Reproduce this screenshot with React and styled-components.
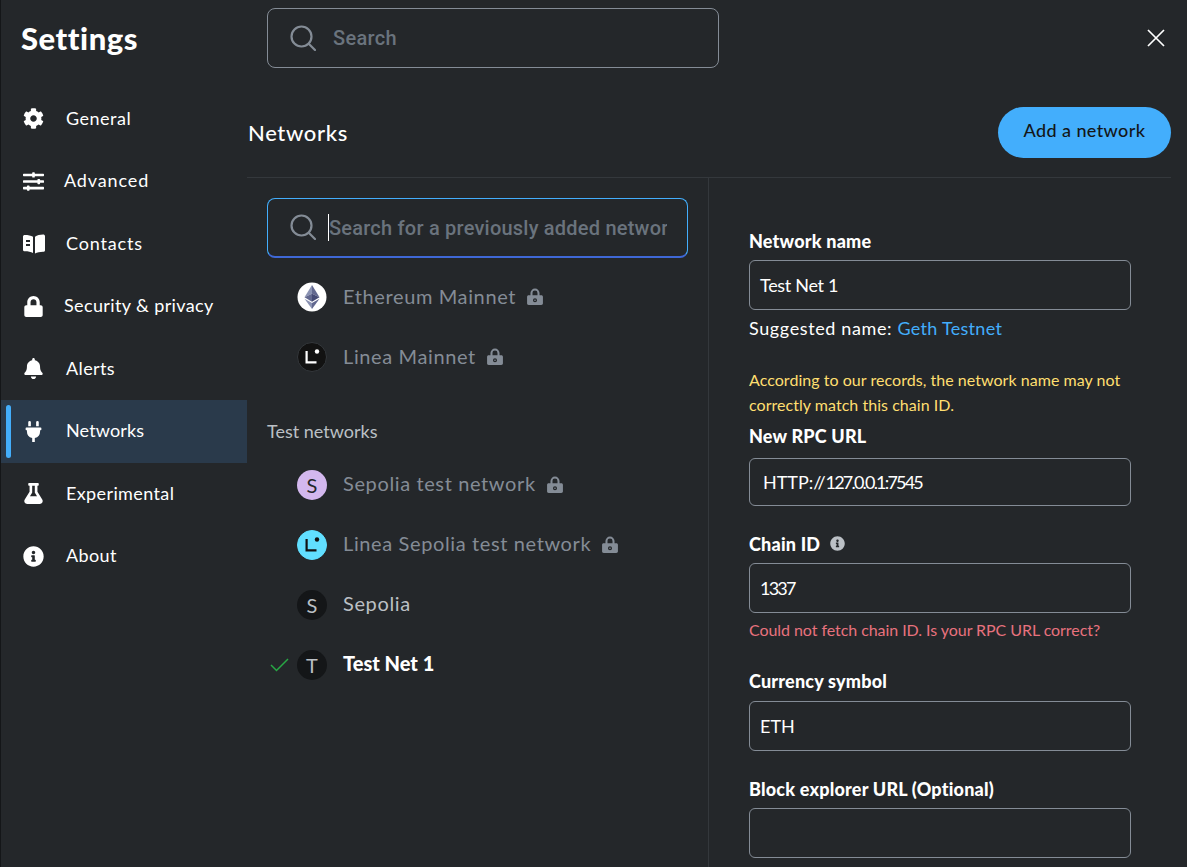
import React from 'react';
import styled, { createGlobalStyle } from 'styled-components';
import { FaCog, FaSlidersH, FaLock, FaBell, FaPlug, FaFlask, FaInfoCircle } from 'react-icons/fa';

const Global = createGlobalStyle`
  html, body { margin: 0; padding: 0; height: 100%; background: #24272a; overflow: hidden; }
  * { box-sizing: border-box; }
  body { font-family: "Lato", "Liberation Sans", sans-serif; color: #fff; }
`;

const Page = styled.div`
  width: 1187px; height: 867px; overflow: hidden; display: flex; flex-direction: column;
  background: #24272a; border-left: 1px solid #141618;
`;
const Header = styled.header`
  flex: 0 0 87.5px; display: flex; align-items: flex-start; position: relative;
`;
const Title = styled.h1`
  margin: 0; width: 266px; padding: 19px 0 0 20px; font-size: 31px; line-height: 38px; font-weight: 900; letter-spacing: .55px;
`;
const SearchBox = styled.div`
  display: flex; align-items: center; gap: 17px; margin-top: ${p => p.$mt ?? 8}px; width: ${p => p.$w}px; height: ${p => p.$h}px;
  padding: 0 20px 0 22px; border: 1px solid ${p => p.$focus ? '#43aefc' : '#848c96'}; border-radius: 8px;
  border-bottom: ${p => p.$focus ? '2px solid #3f68d6' : undefined};
  overflow: hidden; flex: none;
`;
const SearchText = styled.span`
  font-family: "Roboto", sans-serif; font-size: 20px; font-weight: 500; color: #6a737d; white-space: nowrap; overflow: hidden;
  min-width: 0; letter-spacing: .3px;
`;
const CaretText = styled(SearchText)`
  border-left: 1.5px solid #fff; margin-left: -5px; line-height: 26px; padding-top: 1px; letter-spacing: .22px;
`;
const Close = styled.button`
  position: absolute; right: 20px; top: 28px; width: 21px; height: 21px; padding: 0; border: 0; background: none; display: flex;
`;
const Body = styled.div`flex: 1; display: flex; min-height: 0;`;
const Sidebar = styled.nav`flex: 0 0 246px; display: flex; flex-direction: column;`;
const Item = styled.div`
  height: 62.5px; display: flex; align-items: center; position: relative; font-size: 18px;
  background: ${p => p.$active ? '#2a3a4b' : 'transparent'};
`;
const ItemIcon = styled.span`
  width: 65px; padding-left: 22px; display: flex; flex: none; font-size: 21px;
`;
const ItemLabel = styled.span`margin-left: ${p => p.$ml ?? 0}px; padding-bottom: 2px; letter-spacing: ${p => p.$ls ?? .38}px;`;
const Indicator = styled.span`
  position: absolute; left: 5px; top: 5px; bottom: 5px; width: 5px; border-radius: 3px; background: #43aefc;
`;
const Content = styled.main`flex: 1; display: flex; flex-direction: column; min-width: 0; padding-right: 16px;`;
const SectionHead = styled.div`
  height: 90px; display: flex; align-items: flex-start; justify-content: space-between; padding-top: 19.5px; border-bottom: 1px solid #34383c;
`;
const SectionTitle = styled.h2`margin: 0; font-size: 22px; font-weight: 500; line-height: 52px; padding-left: 1px; letter-spacing: .65px;`;
const AddButton = styled.button`
  width: 173px; height: 51px; padding: 0 0 5px; border: 0; border-radius: 26px; background: #43aefc; color: #141618; font: 500 18px "Lato", sans-serif; letter-spacing: .4px; flex: none;
`;
const Columns = styled.div`flex: 1; display: flex; min-height: 0;`;
const ListCol = styled.section`
  flex: 0 0 462px; border-right: 1px solid #34383c; padding-left: 20px; display: flex; flex-direction: column;
`;
const Net = styled.div`
  height: 60px; display: flex; align-items: center; padding-left: 30px; position: relative; font-size: 20px; letter-spacing: ${p => p.$bold ? 0 : '.62px'};
  margin-top: ${p => p.$mt ?? 0}px;
  color: ${p => p.$bold ? '#fff' : p.$sub ? '#bbc0c5' : '#848c96'}; font-weight: ${p => p.$bold ? 900 : 400};
`;
const NetName = styled.span`padding-bottom: ${p => p.$pb ?? 3}px; margin-left: 1px;`;
const Avatar = styled.span`
  width: 30px; height: 30px; border-radius: 50%; flex: none; margin-right: 15px; display: flex; align-items: center; justify-content: center;
  background: ${p => p.$bg}; color: ${p => p.$fg}; font-size: 20px; font-weight: 400; letter-spacing: 0;
`;
const Check = styled.svg`position: absolute; left: 3px; top: 22px;`;
const Lock = styled.svg`margin-left: 11px; flex: none;`;
const Group = styled.div`
  height: 40px; margin-top: 24px; margin-bottom: 4px; display: flex; align-items: center; font-size: 18px; color: #bbc0c5;
`;
const FormCol = styled.section`flex: 0 0 382px; margin-left: 40px; padding-top: 51px; display: flex; flex-direction: column;`;
const Label = styled.label`
  display: flex; align-items: center; gap: 10px; font-size: 18px; font-weight: 900; line-height: 24px; height: 24px; letter-spacing: .2px;
  margin-top: ${p => p.$mt ?? 0}px;
`;
const Input = styled.div`
  width: 382px; height: ${p => p.$h ?? 50}px; margin-top: ${p => p.$mt ?? 7}px; border: 1px solid #848c96; border-radius: 6px; display: flex; align-items: center;
  padding-left: ${p => p.$pl ?? 10}px; font-size: 18px; white-space: pre;
`;
const Digits = styled.span`letter-spacing: ${p => p.$ls}px;`;
const Suggest = styled.div`font-size: 18px; line-height: 24px; margin-top: 6px; letter-spacing: .62px;`;
const Link = styled.a`color: #43aefc; letter-spacing: .3px;`;
const Warn = styled.div`font-size: 16px; line-height: 25px; color: #ffdf70; margin-top: 27px; letter-spacing: .04px;`;
const Err = styled.div`font-size: 16px; line-height: 20px; color: #e8727e; margin-top: 7px; letter-spacing: -.06px;`;

const Mag = () => (
  <svg width="26" height="26" viewBox="0 0 26 26" fill="none" stroke="#848c96" strokeWidth="2.2" style={{flex:'none'}}>
    <circle cx="11.5" cy="11.5" r="10" /><path d="M19 19l6 6" strokeLinecap="round" />
  </svg>
);
const BookIcon = () => (
  <svg width="22" height="20" viewBox="0 0 22 20"><path fill="#fff" fillRule="evenodd" d="M0 2.5C0 1.5.8 1 2 1c3 0 6 .6 8 1.8V19c-2-1.2-5-1.7-8-1.7-1.2 0-2-.5-2-1.5zM3 6h4v2H3zm0 4h4v2H3zM12 2.8C14 1.5 17 .6 20 .6c1.2 0 2 .6 2 1.6v14c0 1-.8 1.5-2 1.6-3 .2-6 .6-8 1.7z"/></svg>
);
const LockSmall = () => (
  <Lock width="16" height="17" viewBox="1 0 14 15">
    <path fill="#848c96" fillRule="evenodd" d="M4 6.500V4.500a4 4 0 018 0v2h1.500c1 0 1.500.6 1.500 1.500v5.500c0 1-.6 1.500-1.500 1.500h-11C1.500 15 1 14.400 1 13.500V8c0-.9.5-1.500 1.500-1.500zm1.800 0h4.400V4.500a2.200 2.200 0 00-4.400 0zM8 9a1.800 1.800 0 100 3.600A1.800 1.800 0 008 9zm0 1.100a.7.7 0 110 1.400.7.7 0 010-1.400z"/>
  </Lock>
);
const Eth = () => (
  <svg width="30" height="30" viewBox="0 0 30 30" style={{marginRight:15,flex:'none'}}>
    <circle cx="15" cy="15" r="14.500" fill="#fff"/>
    <path fill="#8a92b2" d="M15 3l-7.500 12.300L15 11.800z"/><path fill="#62688f" d="M15 3v8.800l7.500 3.500z"/>
    <path fill="#62688f" d="M15 11.800l-7.500 3.500 7.500 4.400z"/><path fill="#454a75" d="M15 11.800v7.900l7.500-4.400z"/>
    <path fill="#8a92b2" d="M7.500 16.700L15 27v-6z"/><path fill="#62688f" d="M15 21v6l7.500-10.300z"/>
  </svg>
);
const LineaIcon = ({bg, fg}) => (
  <svg width="30" height="30" viewBox="0 0 30 30" style={{marginRight:15,flex:'none'}}>
    <circle cx="15" cy="15" r="14.500" fill={bg} stroke={bg === '#121212' ? '#34383c' : bg}/>
    <path fill={fg} d="M8.500 9h2.200v10.200h8.800V21.500H8.500z"/><circle cx="20" cy="9.500" r="2.200" fill={fg}/>
  </svg>
);

const items = [
  { label: 'General', icon: <FaCog />, ls: .5 },
  { label: 'Advanced', icon: <FaSlidersH />, ml: -2, ls: .88 },
  { label: 'Contacts', icon: <BookIcon />, ls: .85 },
  { label: 'Security & privacy', icon: <FaLock />, ml: -2 },
  { label: 'Alerts', icon: <FaBell /> },
  { label: 'Networks', icon: <FaPlug />, active: true, ls: .15 },
  { label: 'Experimental', icon: <FaFlask /> },
  { label: 'About', icon: <FaInfoCircle /> },
];

export default function App() {
  return (
    <Page>
      <Global />
      <Header>
        <Title>Settings</Title>
        <SearchBox $w={452} $h={60}><Mag /><SearchText>Search</SearchText></SearchBox>
        <Close aria-label="close">
          <svg width="21" height="21" viewBox="0 0 21 21" stroke="#fff" strokeWidth="1.700"><path d="M2 2l16 16M18 2L2 18"/></svg>
        </Close>
      </Header>
      <Body>
        <Sidebar>
          {items.map(it => (
            <Item key={it.label} $active={it.active}>
              {it.active && <Indicator />}
              <ItemIcon>{it.icon}</ItemIcon>
              <ItemLabel $ml={it.ml} $ls={it.ls}>{it.label}</ItemLabel>
            </Item>
          ))}
        </Sidebar>
        <Content>
          <SectionHead>
            <SectionTitle>Networks</SectionTitle>
            <AddButton>Add a network</AddButton>
          </SectionHead>
          <Columns>
            <ListCol>
              <SearchBox $w={421} $h={60} $focus $mt={20}><Mag /><CaretText>Search for a previously added network</CaretText></SearchBox>
              <Net $mt={9}><Eth /><NetName $pb={1}>Ethereum Mainnet</NetName><LockSmall /></Net>
              <Net><LineaIcon bg="#121212" fg="#fff" /><NetName $pb={1}>Linea Mainnet</NetName><LockSmall /></Net>
              <Group>Test networks</Group>
              <Net><Avatar $bg="#d3b8ee" $fg="#24272a">S</Avatar><NetName>Sepolia test network</NetName><LockSmall /></Net>
              <Net><LineaIcon bg="#61dfff" fg="#121212" /><NetName>Linea Sepolia test network</NetName><LockSmall /></Net>
              <Net $sub><Avatar $bg="#141618" $fg="#bbc0c5">S</Avatar><NetName>Sepolia</NetName></Net>
              <Net $bold>
                <Check width="20" height="16" viewBox="0 0 20 16" fill="none" stroke="#28a745" strokeWidth="1.500"><path d="M1 8l5.500 5.500L18 2"/></Check>
                <Avatar $bg="#141618" $fg="#bbc0c5">T</Avatar><NetName>Test Net 1</NetName>
              </Net>
            </ListCol>
            <FormCol>
              <Label>Network name</Label>
              <Input><Digits $ls={-.3}>Test Net 1</Digits></Input>
              <Suggest>Suggested name: <Link>Geth Testnet</Link></Suggest>
              <Warn>According to our records, the network name may not correctly match this chain ID.</Warn>
              <Label $mt={7}>New RPC URL</Label>
              <Input $h={48} $mt={10} $pl={13}>HTTP://<Digits $ls={-1.8}>127.0.0.1:7545</Digits></Input>
              <Label $mt={26}>Chain ID <FaInfoCircle size={15} color="#bbc0c5" /></Label>
              <Input $mt={7}><Digits $ls={-1.8}>1337</Digits></Input>
              <Err>Could not fetch chain ID. Is your RPC URL correct?</Err>
              <Label $mt={29}>Currency symbol</Label>
              <Input $mt={8}>ETH</Input>
              <Label $mt={26}>Block explorer URL (Optional)</Label>
              <Input $mt={7}></Input>
            </FormCol>
          </Columns>
        </Content>
      </Body>
    </Page>
  );
}
